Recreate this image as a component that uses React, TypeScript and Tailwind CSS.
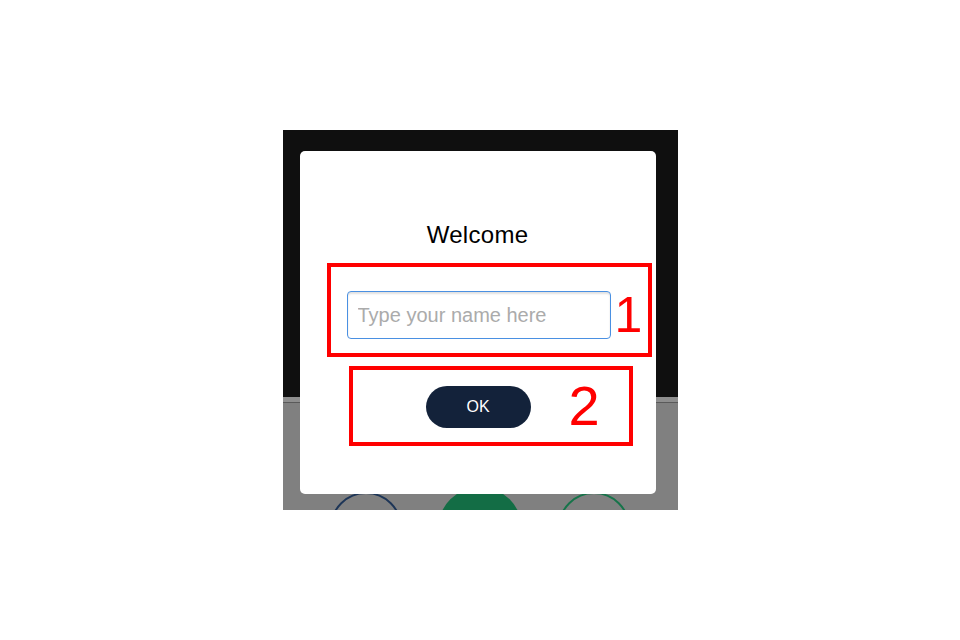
export default function App() {
  return (
    <div className="flex h-screen w-full items-center justify-center bg-white" style={{ fontFamily: '"Liberation Sans", Arial, sans-serif' }}>
      <div className="relative flex h-[380px] w-[395px] flex-col overflow-hidden">
        <div className="h-[267px] shrink-0 bg-[#0f0f0f]" />
        <div className="h-[6px] shrink-0 border-b border-[#5a5a5a] bg-[#8e8e8e]" />
        <div className="flex h-[107px] shrink-0 items-start justify-center gap-[36px] bg-[#808080]">
          <div className="mt-[89px] h-[72px] w-[72px] shrink-0 rounded-full border-2 border-[#1d3557]" />
          <div className="mt-[84px] h-[84px] w-[84px] shrink-0 rounded-full bg-[#136d45]" />
          <div className="mt-[89px] h-[72px] w-[72px] shrink-0 rounded-full border-2 border-[#16744a]" />
        </div>

        <div className="absolute left-[17px] top-[21px] flex h-[343px] w-[356px] flex-col items-center rounded-[5px] bg-white">
          <h1 className="mt-[71px] text-[24px] leading-[26px] tracking-[0.3px] text-black">Welcome</h1>

          <div className="ml-[27px] mt-[15px] flex h-[94px] w-[325px] items-start self-start border-4 border-[#ff0000] pl-[16px] pt-[24px]">
            <input
              type="text"
              placeholder="Type your name here"
              className="h-[48px] w-[264px] rounded-[4px] border border-[#4a90e2] px-[10px] text-[20px] text-black shadow-[inset_0_2px_2px_rgba(0,0,0,0.12)] outline-none placeholder:text-[#ababab]"
            />
            <span className="ml-[4px] mt-[-4px] text-[50px] leading-[56px] text-[#ff0000]">1</span>
          </div>

          <div className="ml-[49px] mt-[9px] flex h-[80px] w-[284px] items-start self-start border-4 border-[#ff0000] pl-[73px] pt-[16px]">
            <button className="h-[42px] w-[105px] rounded-full bg-[#13223a] text-[16px] text-white">OK</button>
            <span className="ml-[38px] mt-[-11px] text-[56px] leading-[62px] text-[#ff0000]">2</span>
          </div>
        </div>
      </div>
    </div>
  )
}
